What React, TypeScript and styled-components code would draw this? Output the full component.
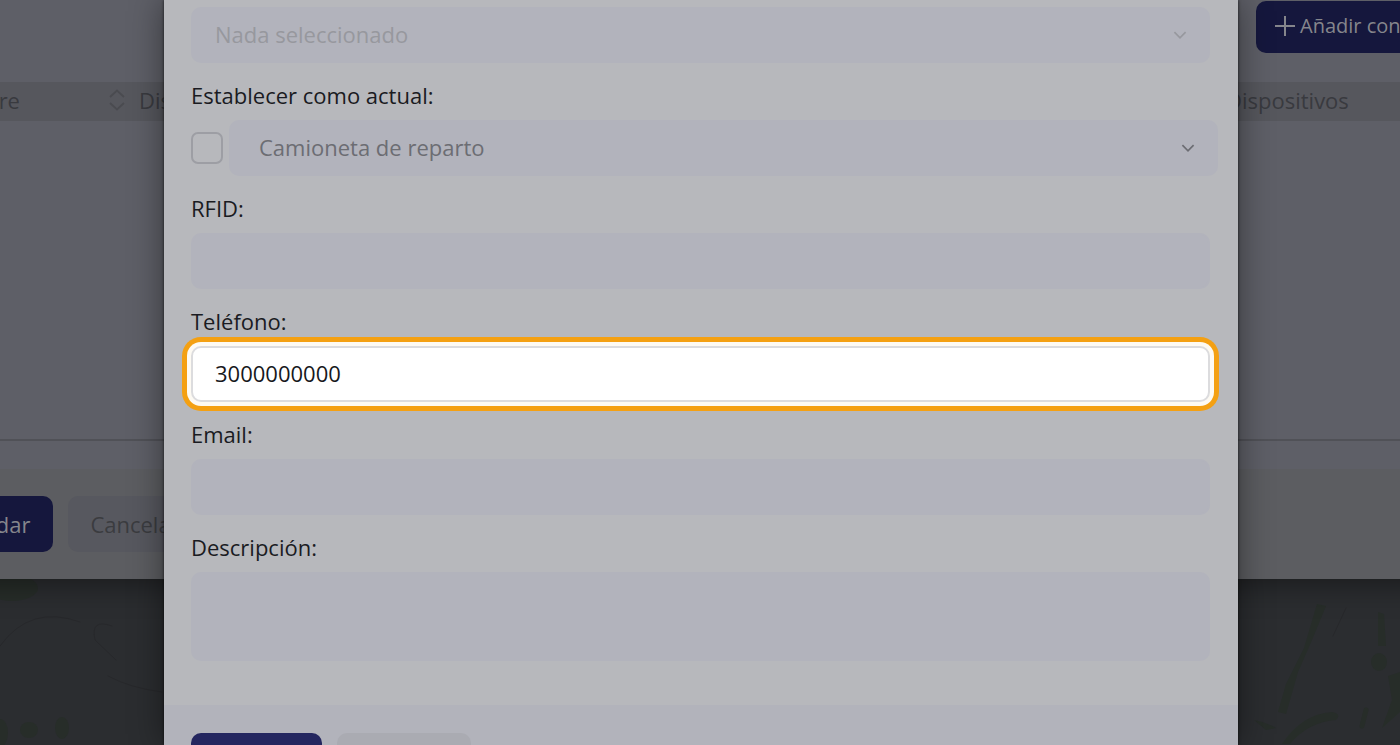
import React from "react";
import styled, { createGlobalStyle } from "styled-components";

const GlobalStyle = createGlobalStyle`
  * { box-sizing: border-box; }
  body { margin: 0; background: #2b2d30; overflow: hidden; }
  body, button, input, select, textarea { font-family: "Open Sans", "Noto Sans", sans-serif; font-size: 22px; }
`;

const Page = styled.div`
  position: relative;
  height: 100vh;
  overflow: hidden;
  background: #2b2d30;
`;

const Terrain = styled.svg`
  position: absolute;
  inset: 0;
  width: 100%;
  height: 100%;
  fill: none;
  stroke: #272d29;
  stroke-linecap: round;
`;

const Backdrop = styled.section`
  position: relative;
  margin: 0 -106px;
  background: #5e5f67;
  box-shadow: 0 4px 30px rgba(0, 0, 0, 0.45);
`;

const Toolbar = styled.div`
  display: flex;
  justify-content: flex-end;
  padding: 1px 26px 29px;
`;

const Table = styled.table`
  width: 100%;
  height: 359px;
  border-collapse: collapse;
  table-layout: fixed;
  border-bottom: 2px solid #505157;
`;

const HeadCell = styled.th<{ $width?: number; $indent?: number }>`
  width: ${(p) => (p.$width ? `${p.$width}px` : "auto")};
  height: 39px;
  padding: 0 0 3px ${(p) => p.$indent ?? 14}px;
  background: #56575d;
  color: #393a3f;
  font-weight: 400;
  text-align: left;
  line-height: 30px;
`;

const HeadContent = styled.div`
  display: flex;
  align-items: center;
  justify-content: space-between;
`;

const BackFooter = styled.footer`
  display: flex;
  gap: 15px;
  margin-top: 28px;
  padding: 27px 28px;
  background: #5c5d61;
`;

const Button = styled.button<{ $tone: "dim" | "dimPlain" | "navy" | "plain" }>`
  display: flex;
  align-items: center;
  gap: 4px;
  height: 56px;
  padding: 0 ${(p) => (p.$tone === "dimPlain" || p.$tone === "plain" ? 22 : 23)}px;
  border: 0;
  border-radius: 10px;
  white-space: nowrap;
  color: ${(p) => ({ dim: "#85868c", dimPlain: "#3b3c40", navy: "#b8b9bf", plain: "#707178" })[p.$tone]};
  background: ${(p) => ({ dim: "#15173d", dimPlain: "#57585f", navy: "#24265f", plain: "#aaabb2" })[p.$tone]};
`;

const AddButton = styled(Button)`
  height: 52px;
  padding: 0 18px 3px;
  font-size: 20px;
`;

const Modal = styled.form`
  position: absolute;
  top: 0;
  bottom: 0;
  left: 164px;
  right: 162px;
  overflow: hidden;
  background: #b7b8bc;
  box-shadow: 0 0 3px rgba(0, 0, 0, 0.7), 0 0 32px rgba(0, 0, 0, 0.45);
`;

const Fields = styled.div`
  padding: 7px 28px 44px 27px;
`;

const Label = styled.label`
  display: block;
  padding: 17px 0 10px;
  line-height: 30px;
  color: #1a1b22;
`;

const SelectWrap = styled.div<{ $muted?: boolean }>`
  display: grid;
  flex: 1;
  align-items: center;
  color: ${(p) => (p.$muted ? "#97989e" : "#6c6d73")};

  > * { grid-area: 1 / 1; }
  > svg { justify-self: end; margin-right: 23px; pointer-events: none; }
`;

const Select = styled.select<{ $inset: number }>`
  appearance: none;
  width: 100%;
  height: 56px;
  padding: 0 ${(p) => p.$inset}px 2px;
  border: 0;
  border-radius: 10px;
  background: #b2b3bc;
  color: inherit;
  opacity: 1;
`;

const CheckRow = styled.div`
  display: flex;
  align-items: center;
  gap: 6px;
  margin-right: -8px;
`;

const Checkbox = styled.input`
  appearance: none;
  width: 32px;
  height: 32px;
  margin: 0;
  border: 2px solid #9d9ea4;
  border-radius: 7px;
`;

const Input = styled.input<{ $active?: boolean }>`
  display: block;
  width: 100%;
  height: 56px;
  padding: 0 22px 2px;
  border: 2px solid ${(p) => (p.$active ? "#dcdcde" : "#b2b3bc")};
  border-radius: 10px;
  background: ${(p) => (p.$active ? "#ffffff" : "#b2b3bc")};
  box-shadow: ${(p) => (p.$active ? "0 0 0 4px #fdfaf3, 0 0 0 9px #f4a012" : "none")};
  color: #17181c;
  outline: 0;
`;

const TextArea = styled.textarea`
  display: block;
  width: 100%;
  height: 89px;
  padding: 12px 22px;
  border: 0;
  border-radius: 10px;
  background: #b2b3bc;
  resize: none;
`;

const ModalFooter = styled.footer`
  display: flex;
  gap: 15px;
  padding: 28px 27px;
  background: #b2b3bb;
`;

const Chevron = () => (
  <svg width="14" height="14" viewBox="0 0 14 14" fill="none" stroke="currentColor" strokeWidth="1.7" aria-hidden="true">
    <path d="M1.4 4.2 L7 9.8 L12.6 4.2" />
  </svg>
);

const SortIcon = () => (
  <svg width="16" height="22" viewBox="0 0 16 22" fill="none" stroke="#4a4b50" strokeWidth="1.8" aria-hidden="true">
    <path d="M1 8 L8 1.5 L15 8 M1 14 L8 20.5 L15 14" />
  </svg>
);

const PlusIcon = () => (
  <svg width="22" height="22" viewBox="0 0 22 22" fill="none" stroke="currentColor" strokeWidth="2" aria-hidden="true">
    <path d="M11 1 V21 M1 11 H21" />
  </svg>
);

export default function App() {
  return (
    <>
      <GlobalStyle />
      <Page>
        <Terrain viewBox="0 0 1400 745" preserveAspectRatio="xMidYMid slice" aria-hidden="true">
          <g fill="#272d29" stroke="none">
            <ellipse cx="12" cy="588" rx="26" ry="13" />
            <ellipse cx="0" cy="733" rx="8" ry="14" />
            <ellipse cx="29" cy="730" rx="9" ry="8" />
            <ellipse cx="62" cy="728" rx="7" ry="11" />
            <ellipse cx="1379" cy="662" rx="8" ry="9" />
            <path d="M1400 672 L1388 676 L1392 700 L1382 728 L1400 712 Z" />
            <path d="M1317 604 L1326 606 L1312 640 L1298 672 L1286 714 L1278 712 L1286 684 L1304 648 Z" />
            <path d="M1282 744 Q1302 714 1332 712 Q1342 714 1336 720 Q1308 722 1290 744 Z" />
            <path d="M1254 720 Q1266 722 1276 728 L1266 730 Z" />
            <path d="M1378 612 L1384 614 L1386 646 L1378 646 Z" />
          </g>
          <path strokeWidth="5" d="M1366 710 L1362 726" />
          <g stroke="#27282b" strokeWidth="1">
            <path d="M0 646 Q30 604 80 622 M112 626 Q90 618 95 640 L116 660" />
            <path d="M108 676 Q130 688 162 692 M1333 636 L1346 608" />
          </g>
        </Terrain>
        <Backdrop>
          <Toolbar>
            <AddButton $tone="dim" type="button"><PlusIcon />Añadir conductor</AddButton>
          </Toolbar>
          <Table>
            <thead>
              <tr>
                <HeadCell $width={231} $indent={41}><HeadContent>Nombre<SortIcon /></HeadContent></HeadCell>
                <HeadCell>Disp.</HeadCell>
                <HeadCell $width={294}>Dispositivos</HeadCell>
              </tr>
            </thead>
            <tbody><tr><td colSpan={3} /></tr></tbody>
          </Table>
          <BackFooter>
            <Button $tone="dim" type="button">Guardar</Button>
            <Button $tone="dimPlain" type="button">Cancelar</Button>
          </BackFooter>
        </Backdrop>
        <Modal>
          <Fields>
            <SelectWrap $muted>
              <Select $inset={24} disabled aria-label="Selección"><option>Nada seleccionado</option></Select>
              <Chevron />
            </SelectWrap>
            <Label htmlFor="current">Establecer como actual:</Label>
            <CheckRow>
              <Checkbox type="checkbox" id="current" />
              <SelectWrap>
                <Select $inset={30} aria-label="Vehículo"><option>Camioneta de reparto</option></Select>
                <Chevron />
              </SelectWrap>
            </CheckRow>
            <Label htmlFor="rfid">RFID:</Label>
            <Input id="rfid" />
            <Label htmlFor="phone">Teléfono:</Label>
            <Input id="phone" type="tel" defaultValue="3000000000" $active />
            <Label htmlFor="email">Email:</Label>
            <Input id="email" type="email" />
            <Label htmlFor="description">Descripción:</Label>
            <TextArea id="description" />
          </Fields>
          <ModalFooter>
            <Button $tone="navy" type="button">Guardar</Button>
            <Button $tone="plain" type="button">Cancelar</Button>
          </ModalFooter>
        </Modal>
      </Page>
    </>
  );
}
